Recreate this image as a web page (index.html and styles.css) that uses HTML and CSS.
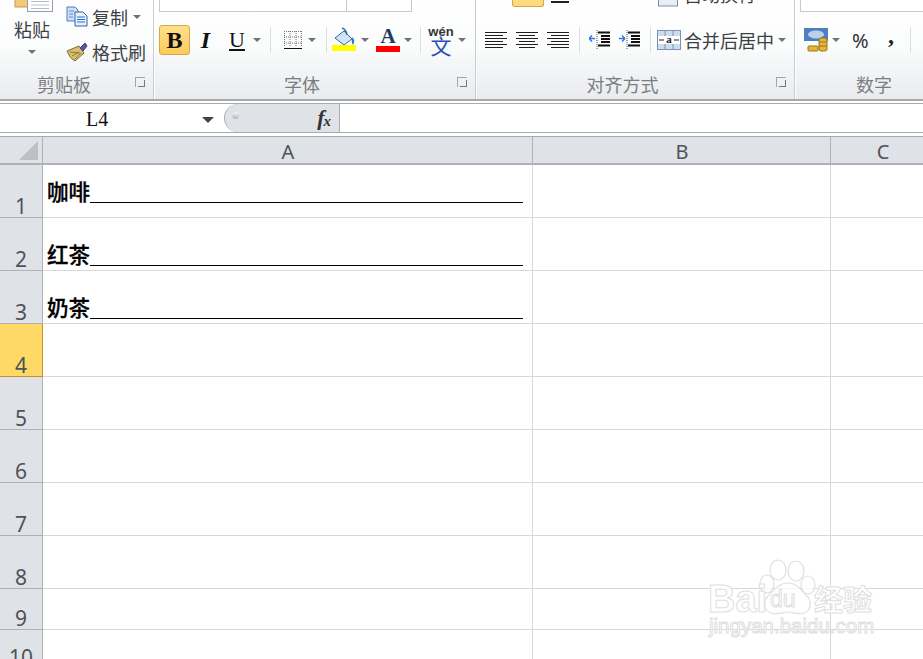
FILE: index.html
```html
<!DOCTYPE html>
<html lang="zh">
<head>
<meta charset="utf-8">
<title>Excel</title>
<link rel="stylesheet" href="styles.css">
</head>
<body>
<div class="app">
  <div class="ribbon">
    <section class="group g-clip">
      <div class="body clip-body">
        <div class="paste">
          <svg class="i-paste" width="40" height="13" viewBox="0 0 40 13"><rect x="1" y="-6" width="14" height="13" fill="#f3c878" stroke="#c49a4e"/><rect x="13.500" y="-8" width="25" height="19.500" fill="#fff" stroke="#8f9db0"/><path d="M17 1.500h18M17 5h18M17 8.500h18" stroke="#b3bfcf"/></svg>
          <span class="paste-text">粘贴</span>
          <i class="arrow paste-arrow"></i>
        </div>
        <div class="clip-cmds">
          <div class="cmd">
            <svg width="22" height="21" viewBox="0 0 22 21"><path d="M1 1h8l3 3v11H1z" fill="#cfe0f6" stroke="#4f7cc0"/><path d="M9 6h8l4 4v10H9z" fill="#e9f1fb" stroke="#2f62ad"/><path d="M11 11h8M11 13.500h8M11 16h8" stroke="#2f72cc"/><path d="M3 5h5M3 8h4M3 11h4" stroke="#5c8ed0"/></svg>
            <span>复制</span><i class="arrow"></i>
          </div>
          <div class="cmd">
            <svg width="22" height="20" viewBox="0 0 22 20"><path d="M1 9 L13 4 L18 11 L9 19 Q4 17 1 9z" fill="#d8c070" stroke="#7d6a32"/><path d="M4 10l10 1M6 14l7-4M9 17l6-6" stroke="#8f7b3b"/><path d="M14 6 L19 1 L21 4 L17 9z" fill="#5b55a8" stroke="#3f3a80"/></svg>
            <span>格式刷</span>
          </div>
        </div>
      </div>
      <div class="label-row"><span class="label">剪贴板</span><i class="launcher"></i></div>
    </section>

    <section class="group g-font">
      <div class="body">
        <div class="top-boxes"><div class="box b-name"></div><div class="box b-size"></div></div>
        <div class="tools">
          <span class="btn-bold">B</span>
          <span class="ti">I</span>
          <span class="tu">U</span><i class="arrow a-u"></i>
          <b class="sep s-1"></b>
          <svg class="i-border" width="20" height="20" viewBox="0 0 20 20"><path d="M1 1.500h18M1 7h18M1 13h18M1.500 1v15M7 1v15M13 1v15M18.500 1v15" stroke="#777" stroke-dasharray="1 1"/><path d="M1 18.500h18" stroke="#111" stroke-width="1"/></svg><i class="arrow a-b"></i>
          <b class="sep s-2"></b>
          <svg class="i-fill" width="24" height="24" viewBox="0 0 24 24"><path d="M3 11 L12 4 L20 12 L12 18z" fill="#d3e3f6" stroke="#2f6aa8"/><path d="M10 1 q4 1 5 7" fill="none" stroke="#2f6aa8" stroke-width="1.500"/><path d="M20 10 q4 3 1 8 q-2-3-1-8z" fill="#2f7fc8"/><rect y="18" width="24" height="6" fill="#ff0"/></svg><i class="arrow a-f"></i>
          <span class="font-a">A<b class="red"></b></span><i class="arrow a-a"></i>
          <b class="sep s-3"></b>
          <span class="wen"><span class="wen-py">wén</span><span class="wen-zi">文</span></span><i class="arrow a-w"></i>
        </div>
      </div>
      <div class="label-row"><span class="label">字体</span><i class="launcher"></i></div>
    </section>

    <section class="group g-align">
      <div class="body">
        <div class="align-top">
          <span class="yellow-btn"></span><span class="dash"></span>
          <svg class="i-wrap" width="20" height="7" viewBox="0 0 20 7"><rect x="0.500" y="-6" width="19" height="12" fill="#e9eef6" stroke="#7f8fa8"/></svg>
          <span class="wrap-text">自动换行</span>
        </div>
        <div class="tools">
          <svg class="i-al" width="23" height="18" viewBox="0 0 23 18"><path d="M0 1.500h22M0 4.500h18M0 7.500h22M0 10.500h18M0 13.500h22M0 16.500h18" stroke="#1e1e1e"/></svg>
          <svg class="i-al2" width="23" height="18" viewBox="0 0 23 18"><path d="M0 1.500h22M3 4.500h16M0 7.500h22M3 10.500h16M0 13.500h22M3 16.500h16" stroke="#1e1e1e"/></svg>
          <svg class="i-al2" width="23" height="18" viewBox="0 0 23 18"><path d="M0 1.500h22M4 4.500h18M0 7.500h22M4 10.500h18M0 13.500h22M4 16.500h18" stroke="#1e1e1e"/></svg>
          <b class="sep s-4"></b>
          <svg class="i-in" width="22" height="20" viewBox="0 0 22 20"><path d="M9 2.500h12M12 6h9M12 9h9M12 12h9M9 15.500h12" stroke="#111" stroke-width="2"/><path d="M8 0v19" stroke="#555" stroke-dasharray="1 1"/><path d="M0 8.500h6M0 8.500l3-3M0 8.500l3 3" stroke="#2d7bd6" fill="none" stroke-width="1.500"/></svg>
          <svg class="i-in2" width="22" height="20" viewBox="0 0 22 20"><path d="M9 2.500h12M12 6h9M12 9h9M12 12h9M9 15.500h12" stroke="#111" stroke-width="2"/><path d="M8 0v19" stroke="#555" stroke-dasharray="1 1"/><path d="M0 8.500h6M6 8.500l-3-3M6 8.500l-3 3" stroke="#2d7bd6" fill="none" stroke-width="1.500"/></svg>
          <b class="sep s-5"></b>
          <svg class="i-merge" width="24" height="20" viewBox="0 0 24 20"><rect x="0.500" y="0.500" width="23" height="19" fill="#cfdcee" stroke="#7d93b3"/><rect x="1" y="6" width="22" height="8" fill="#fff"/><path d="M8 1v5M16 1v5M8 14v5M16 14v5" stroke="#7d93b3"/><path d="M2 10h5M17 10h5" stroke="#222"/><text x="12" y="13" text-anchor="middle" class="merge-a">a</text></svg>
          <span class="merge-text">合并后居中</span><i class="arrow a-m"></i>
        </div>
      </div>
      <div class="label-row"><span class="label">对齐方式</span><i class="launcher"></i></div>
    </section>

    <section class="group g-num">
      <div class="body">
        <div class="num-top"></div>
        <div class="tools">
          <svg class="i-cur" width="24" height="24" viewBox="0 0 24 24"><rect width="24" height="13" fill="#4f7fc0"/><ellipse cx="12" cy="6.500" rx="8" ry="4" fill="#bcd0ea"/><rect x="15" y="10" width="8" height="13" rx="2" fill="#e5b53c" stroke="#9c7416"/><path d="M15 14h8M15 18h8" stroke="#9c7416"/><rect x="4" y="18" width="10" height="5" rx="1" fill="#e5b53c" stroke="#9c7416"/></svg><i class="arrow a-c"></i>
          <span class="pct">%</span>
          <span class="comma">,</span>
          <b class="sep s-6"></b>
        </div>
      </div>
      <div class="label-row"><span class="label">数字</span></div>
    </section>
  </div>

  <div class="formula">
    <div class="namebox"><span class="name-text">L4</span><i class="arrow name-arrow"></i></div>
    <div class="fx-part"><i class="knob"></i><span class="fx">f<sub>x</sub></span></div>
    <div class="fbar"></div>
  </div>

  <div class="sheet">
    <div class="grid">
      <div class="corner"><i class="tri"></i></div>
      <div class="ch">A</div><div class="ch">B</div><div class="ch">C</div>

      <div class="rh">1</div><div class="cell a1"><span>咖啡</span><i class="uline"></i></div><div class="cell"></div><div class="cell"></div>
      <div class="rh">2</div><div class="cell"><span>红茶</span><i class="uline"></i></div><div class="cell"></div><div class="cell"></div>
      <div class="rh">3</div><div class="cell"><span>奶茶</span><i class="uline"></i></div><div class="cell"></div><div class="cell"></div>
      <div class="rh sel">4</div><div class="cell"></div><div class="cell"></div><div class="cell"></div>
      <div class="rh">5</div><div class="cell"></div><div class="cell"></div><div class="cell"></div>
      <div class="rh">6</div><div class="cell"></div><div class="cell"></div><div class="cell"></div>
      <div class="rh">7</div><div class="cell"></div><div class="cell"></div><div class="cell"></div>
      <div class="rh">8</div><div class="cell"></div><div class="cell"></div><div class="cell"></div>
      <div class="rh">9</div><div class="cell"></div><div class="cell"></div><div class="cell"></div>
      <div class="rh">10</div><div class="cell"></div><div class="cell"></div><div class="cell"></div>
    </div>
    <svg class="watermark" width="170" height="85" viewBox="0 0 170 85">
      <g class="wm-paw">
        <ellipse cx="71" cy="13" rx="8" ry="10"/><ellipse cx="89" cy="14" rx="8" ry="10"/>
        <ellipse cx="60" cy="27" rx="7" ry="9"/><ellipse cx="101" cy="28" rx="7" ry="9"/>
        <path d="M81 26c9 0 13 7 18 12 6 5 6 15-2 18-6 2-11-1-16-1s-11 3-17 1c-8-3-8-13-2-18 5-5 10-12 19-12z"/>
      </g>
      <text x="1" y="55" class="wm-bai">Bai</text>
      <text x="63" y="50" class="wm-du">du</text>
      <text x="107" y="54" class="wm-cn">经验</text>
      <text x="2" y="76" class="wm-url">jingyan.baidu.com</text>
    </svg>
  </div>
</div>
</body>
</html>
```
FILE: styles.css
```css
* { box-sizing: border-box; }
html, body { margin: 0; height: 100%; overflow: hidden; background: #fff; }
body { font-family: "Noto Sans CJK SC", "Noto Sans", sans-serif; }
i, b { display: block; font-style: normal; }

.app { width: 923px; height: 659px; display: flex; flex-direction: column; overflow: hidden; }

/* Ribbon */
.ribbon {
  height: 101px; display: flex; flex: none; overflow: hidden;
  background: linear-gradient(#fff 0, #fbfcfc 45px, #e9ebee 99px);
  border-bottom: 2px solid #a8abae;
}
.group { flex: none; display: flex; flex-direction: column; border-right: 1px solid #c9ccd0; box-shadow: 1px 0 0 #fff; }
.g-clip { width: 154px; }
.g-font { width: 322px; }
.g-align { width: 319px; }
.g-num { width: 158px; border-right: 0; box-shadow: none; }
.body { height: 71px; flex: none; }
.label-row { display: flex; align-items: center; height: 26px; }
.label { flex: 1; text-align: center; font-size: 18px; line-height: 26px; color: #7a7e84; }
.launcher { flex: none; width: 10px; height: 10px; margin: 0 8px 5px 7px; border-top: 1px solid #a2a5a9; border-left: 1px solid #a2a5a9; }
.launcher::after { content: ""; display: block; width: 6px; height: 6px; margin: 2px 0 0 2px; border-right: 1px solid #777; border-bottom: 1px solid #777; }

.arrow { flex: none; width: 0; height: 0; border-left: 4px solid transparent; border-right: 4px solid transparent; border-top: 4px solid #6f7277; }

/* Clipboard */
.clip-body { display: flex; }
.paste { width: 66px; padding-left: 14px; display: flex; flex-direction: column; align-items: flex-start; }
.paste-text { font-size: 18px; line-height: 24px; margin-top: 4px; color: #3c3f44; }
.paste-arrow { margin: 9px 0 0 14px; }
.i-paste { display: block; }
.clip-cmds { display: flex; flex-direction: column; padding-top: 6px; gap: 14px; }
.cmd { display: flex; align-items: center; height: 21px; font-size: 18px; color: #3c3f44; white-space: nowrap; }
.cmd span { margin-left: 4px; }
.cmd .arrow { margin-left: 5px; }

/* Font */
.g-font .body { padding-left: 5px; }
.top-boxes { display: flex; height: 12px; }
.box { height: 12px; background: #fff; border: 1px solid #c6c9cd; border-top: 0; }
.b-name { width: 188px; }
.b-size { width: 65px; border-left: 0; }
.tools { display: flex; align-items: center; height: 30px; margin-top: 13px; }
.btn-bold {
  width: 31px; height: 30px; display: flex; align-items: center; justify-content: center;
  background: linear-gradient(#fee08a, #fdca5c); border: 1px solid #d7a64a; border-radius: 3px;
  font: bold 24px "Liberation Serif", serif; color: #111;
}
.ti { width: 31px; text-align: center; font: italic bold 24px "Liberation Serif", serif; color: #111; }
.tu { width: 24px; margin-left: 4px; text-align: center; font: 22px "Liberation Serif", serif; color: #111; text-decoration: underline; }
.a-u { margin-left: 4px; }
.sep { flex: none; width: 1px; height: 26px; background: #dcdee1; }
.s-1 { margin-left: 9px; }
.i-border { margin-left: 12px; flex: none; }
.a-b { margin-left: 5px; }
.s-2 { margin-left: 10px; }
.i-fill { margin-left: 5px; flex: none; margin-top: -3px; }
.a-f { margin-left: 5px; }
.font-a { flex: none; width: 24px; margin-left: 7px; text-align: center; font: bold 21px/19px "Liberation Serif", serif; color: #1f3864; margin-top: -2px; }
.red { height: 6px; background: #f00; }
.a-a { margin-left: 4px; }
.s-3 { margin-left: 8px; }
.wen { flex: none; width: 26px; margin-left: 7px; display: flex; flex-direction: column; align-items: center; color: #2b4fb8; }
.wen-py { font: bold 13px/11px "Liberation Sans", sans-serif; color: #333; }
.wen-zi { font-size: 21px; line-height: 17px; }
.a-w { margin-left: 4px; }

/* Alignment */
.g-align .body { padding-left: 9px; }
.align-top { display: flex; height: 12px; align-items: flex-start; }
.yellow-btn { width: 32px; height: 7px; margin-left: 27px; background: #fedb7c; border: 1px solid #d7a64a; border-top: 0; border-radius: 0 0 3px 3px; }
.dash { width: 18px; height: 2px; margin: 1px 0 0 7px; background: #222; }
.i-wrap { margin-left: 89px; flex: none; }
.wrap-text { margin: -18px 0 0 6px; font-size: 18px; line-height: 24px; color: #3c3f44; white-space: nowrap; }
.i-al { flex: none; }
.i-al2 { flex: none; margin-left: 8px; }
.s-4 { margin-left: 9px; }
.i-in { flex: none; margin-left: 9px; }
.i-in2 { flex: none; margin-left: 8px; }
.s-5 { margin-left: 9px; }
.i-merge { flex: none; margin-left: 6px; }
.merge-a { font: bold 11px "Liberation Serif", serif; fill: #222; }
.merge-text { margin-left: 3px; font-size: 18px; color: #3c3f44; white-space: nowrap; }
.a-m { margin-left: 4px; }

/* Number */
.g-num .body { padding-left: 5px; }
.num-top { height: 12px; background: #fff; border: 1px solid #c6c9cd; border-top: 0; border-right: 0; }
.g-num .tools { padding-left: 4px; }
.i-cur { flex: none; }
.a-c { margin-left: 4px; }
.pct { margin-left: 12px; width: 18px; font-size: 20px; color: #333; font-family: "Noto Sans", sans-serif; }
.comma { margin-left: 11px; width: 20px; text-align: center; font: bold 24px/20px "Liberation Serif", serif; color: #222; padding-bottom: 15px; height: 30px; }
.s-6 { margin-left: 9px; }

/* Formula bar */
.formula { flex: none; display: flex; height: 30px; margin-top: 2px; background: #fff; border-top: 1px solid #a8abae; border-bottom: 1px solid #a8abae; }
.namebox { width: 224px; flex: none; display: flex; align-items: center; padding-top: 3px; }
.name-text { margin-left: 86px; width: 117px; font: 20px "Liberation Serif", serif; color: #111; }
.name-arrow { border-left-width: 6px; border-right-width: 6px; border-top: 6px solid #444; margin-left: -1px; }
.fx-part { width: 116px; flex: none; display: flex; align-items: center; justify-content: flex-end; background: #dfe2e6; border-left: 1px solid #aaadb1; border-right: 1px solid #aaadb1; border-radius: 14px 0 0 14px; position: relative; padding-right: 8px; }
.knob { position: absolute; left: 7px; top: 8px; width: 7px; height: 7px; border-radius: 50%; background: linear-gradient(#f2f3f4, #b4b7bb); }
.fx { font: italic bold 22px "Liberation Serif", serif; color: #333; white-space: nowrap; }
.fx sub { font-size: 15px; vertical-align: -1px; line-height: 0; margin-left: -1px; }
.fbar { flex: 1; }

/* Sheet */
.sheet { flex: 1; position: relative; overflow: hidden; margin-top: 3px; border-top: 1px solid #a8abae; }
.grid {
  display: grid;
  grid-template-columns: 43px 490px 298px 104px;
  grid-template-rows: 28px 53px 53px 53px 53px 53px 53px 53px 53px 41px 39px;
}
.corner { background: #dfe2e6; border-right: 1px solid #aeb1b5; border-bottom: 2px solid #aeb1b5; display: flex; align-items: flex-end; justify-content: flex-end; padding: 0 4px 3px 0; }
.tri { width: 0; height: 0; border-left: 19px solid transparent; border-bottom: 19px solid #bdc0c4; }
.ch { background: #dfe2e6; border-right: 1px solid #aeb1b5; border-bottom: 2px solid #aeb1b5; padding-left: 1px; text-align: center; font: 20px/30px "Noto Sans", sans-serif; color: #4e5359; }
.rh { background: #dfe2e6; border-right: 1px solid #aeb1b5; border-bottom: 1px solid #aeb1b5; font: 21px/22px "Noto Sans", sans-serif; color: #4e5359; display: flex; align-items: flex-end; justify-content: center; }
.rh.sel { background: #ffd966; border-right-color: #c98d2d; border-bottom-color: #c98d2d; }
.cell { display: flex; align-items: flex-end; border-right: 1px solid #d6d8da; border-bottom: 1px solid #d6d8da; padding: 0 9px 0 4px; font-size: 21.500px; font-weight: 500; -webkit-text-stroke: 0.300px #000; line-height: 28px; color: #000; }
.cell span { flex: none; margin-bottom: 2px; }
.uline { flex: 1; height: 1px; background: #000; margin-bottom: 4px; }
.a1 { padding-bottom: 10px; }

/* Watermark */
.watermark { position: absolute; left: 707px; top: 420px; }
.wm-paw { fill: #fff; fill-opacity: .75; stroke: #e0e0e0; stroke-width: 1.200; }
.wm-bai, .wm-du, .wm-cn, .wm-url { fill: #fff; stroke: #e0e0e0; stroke-width: 1; font-family: "Liberation Sans", sans-serif; }
.wm-bai { font-size: 38px; font-weight: 700; }
.wm-du { font-size: 23px; }
.wm-cn { font-size: 29px; font-family: "Noto Sans CJK SC", sans-serif; font-weight: 700; }
.wm-url { font-size: 20.500px; }
```
